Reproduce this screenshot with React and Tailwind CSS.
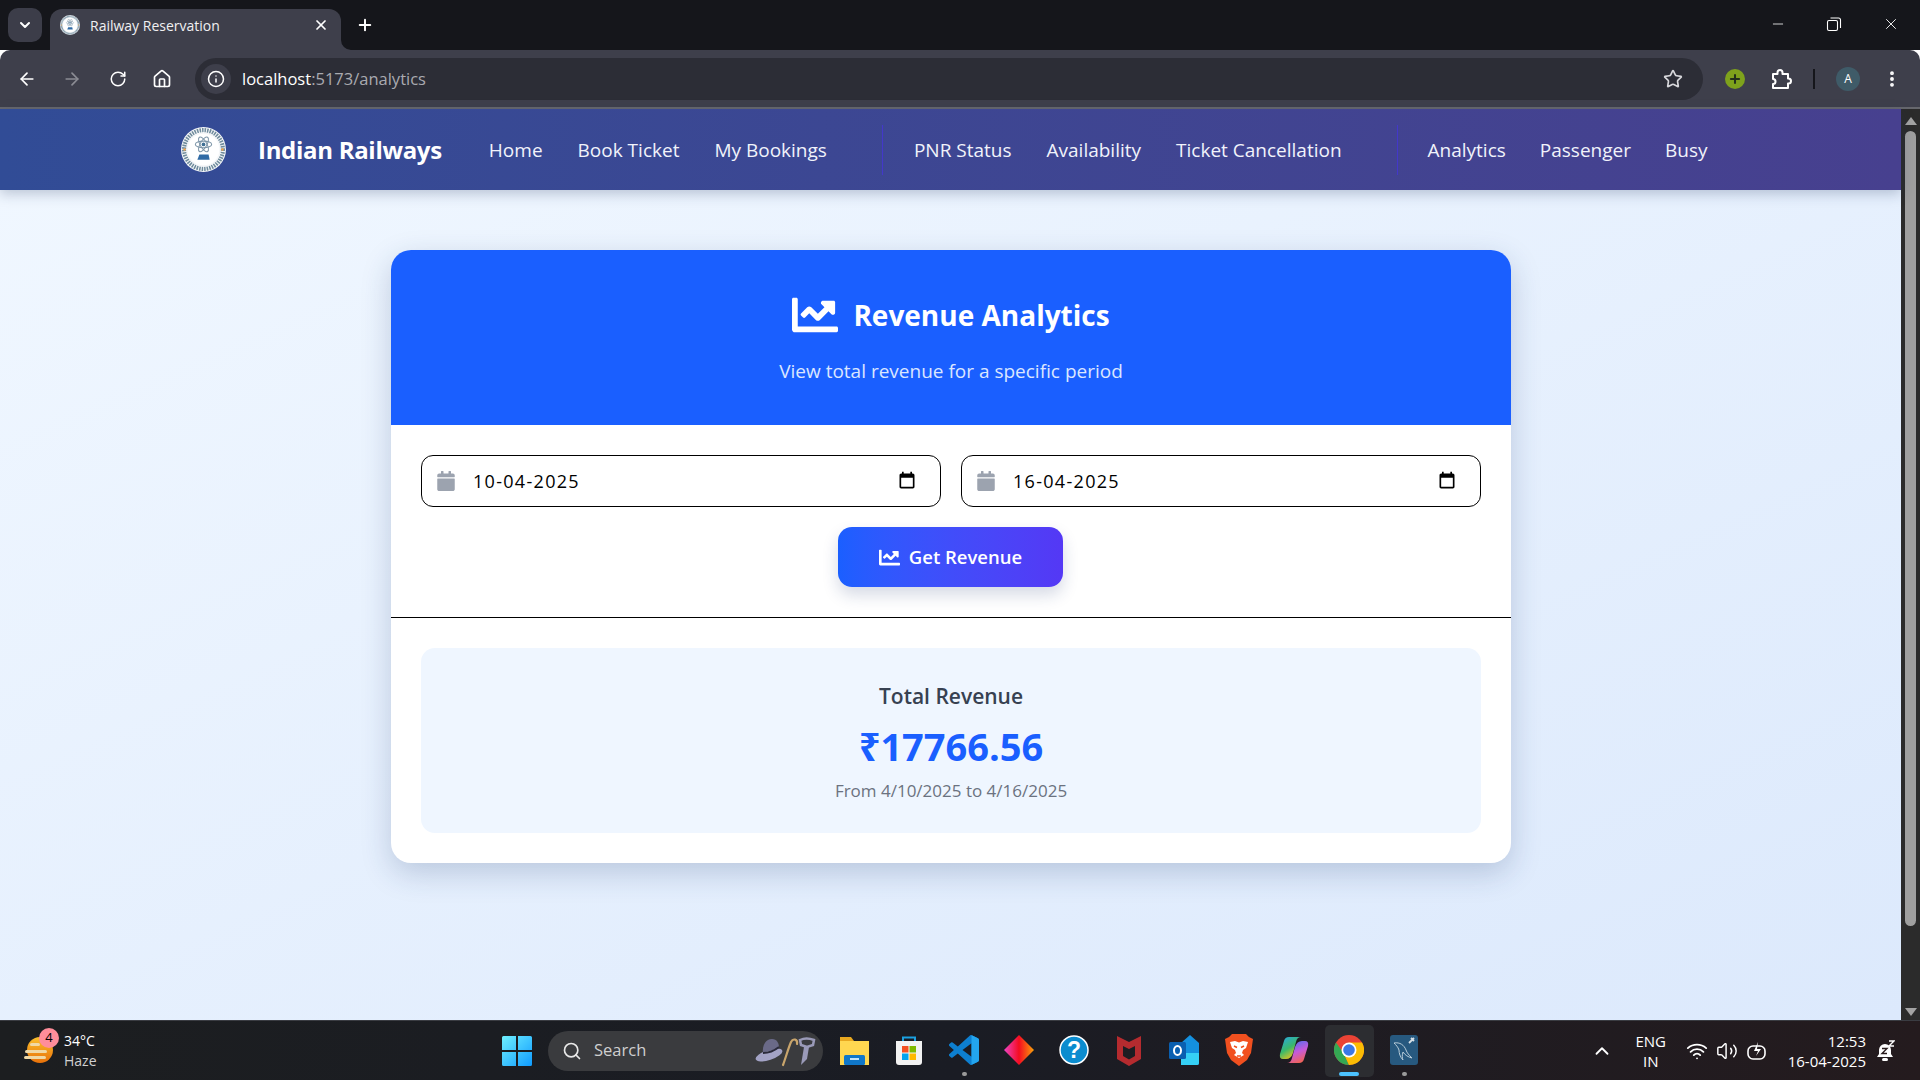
import { ArrowLeft, ArrowRight, RotateCw, Home, Info, Star, MoreVertical, ChevronDown, ChevronUp, X, Plus, Minus, Search, Wifi, Volume2 } from 'lucide-react';
import { FaChartLine, FaCalendar } from 'react-icons/fa';

// little round emblem used for favicon + navbar
function Emblem({ size }) {
  return (
    <svg width={size} height={size} viewBox="0 0 44 44" className="shrink-0">
      <circle cx="22" cy="22" r="22" fill="#f4f6f8" />
      <circle cx="22" cy="22" r="19" fill="none" stroke="#6f8b9c" strokeWidth="4" strokeDasharray="1.5 1" />
      <circle cx="22" cy="22" r="15.5" fill="#fff" />
      <ellipse cx="22" cy="17" rx="8" ry="3.2" fill="none" stroke="#7d95a8" strokeWidth="1" />
      <ellipse cx="22" cy="17" rx="8" ry="3.2" fill="none" stroke="#7d95a8" strokeWidth="1" transform="rotate(60 22 17)" />
      <ellipse cx="22" cy="17" rx="8" ry="3.2" fill="none" stroke="#7d95a8" strokeWidth="1" transform="rotate(120 22 17)" />
      <circle cx="22" cy="17" r="1.8" fill="#3f6f94" />
      <path d="M16 32l2-5h9l1 5z" fill="#2f6aa5" />
      <circle cx="3.5" cy="22" r="1.2" fill="#f0a24a" />
      <circle cx="40.5" cy="22" r="1.2" fill="#f0a24a" />
    </svg>
  );
}

function NavLink({ children }) {
  return <a className="text-[19px] leading-[28px] text-[#f1f3fb] whitespace-nowrap">{children}</a>;
}

function NativeCalendar() {
  return (
    <svg width="20" height="20" viewBox="0 0 24 24" fill="#000">
      <path d="M19 3h-1V1h-2v2H8V1H6v2H5c-1.1 0-2 .9-2 2v14c0 1.1.9 2 2 2h14c1.1 0 2-.9 2-2V5c0-1.1-.9-2-2-2zm0 16H5V8h14v11z" />
    </svg>
  );
}

function DateField({ value }) {
  return (
    <div className="flex-1 h-[52px] flex items-center rounded-[12px] border border-black bg-white pl-[15px] pr-[23px]">
      <FaCalendar className="text-[#9ca3af] w-[18px] h-[20px]" />
      <span className="ml-[18px] flex-1 text-[18px] text-black tracking-[1.3px]">{value}</span>
      <NativeCalendar />
    </div>
  );
}

function TitleBar() {
  return (
    <div className="h-[50px] bg-[#15161b] flex items-end relative shrink-0">
      <div className="absolute left-[8px] top-[8px] w-[34px] h-[34px] rounded-[10px] bg-[#3c3d49] flex items-center justify-center">
        <ChevronDown size={16} strokeWidth={3} className="text-white" />
      </div>
      <div className="relative ml-[50px] w-[291px] h-[41px] bg-[#3e3f4b] rounded-t-[12px] flex items-center pl-[10px] pr-[12px] pb-[9px]">
        <Emblem size={20} />
        <span className="ml-[10px] text-[14px] text-[#f0f0f2] flex-1">Railway Reservation</span>
        <X size={16} strokeWidth={2.6} className="text-white" />
        <svg width="10" height="10" viewBox="0 0 10 10" className="absolute -right-[10px] bottom-0">
          <path d="M0 0a10 10 0 0 0 10 10H0z" fill="#3e3f4b" />
        </svg>
      </div>
      <Plus size={18} strokeWidth={2.6} className="text-white absolute left-[356px] top-[16px]" />
      <div className="ml-auto flex h-full items-center pr-[20px] gap-[40px] text-white pb-[2px]">
        <Minus size={16} strokeWidth={1.2} />
        <svg width="16" height="16" viewBox="0 0 16 16" fill="none" stroke="#fff" strokeWidth="1.1">
          <rect x="1.5" y="4.5" width="10" height="10" rx="1.5" />
          <path d="M4.5 2h8a2 2 0 0 1 2 2v8" />
        </svg>
        <X size={18} strokeWidth={1.2} />
      </div>
    </div>
  );
}

function ToolBar() {
  return (
    <div className="h-[59px] bg-[#3e3f4b] border-b-2 border-[#66676d] rounded-t-[10px] flex items-center shrink-0">
      <ArrowLeft size={20} strokeWidth={2} className="ml-[17px] text-white" />
      <ArrowRight size={20} strokeWidth={2} className="ml-[25px] text-[#8b8c94]" />
      <RotateCw size={18} strokeWidth={2} className="ml-[27px] text-white" />
      <Home size={20} strokeWidth={2} className="ml-[25px] text-white" />
      <div className="ml-[23px] w-[1508px] h-[42px] rounded-full bg-[#2c2d36] flex items-center pl-[6px] pr-[20px]">
        <div className="w-[30px] h-[30px] rounded-full bg-[#3e3f4b] flex items-center justify-center">
          <Info size={18} className="text-white" />
        </div>
        <span className="ml-[11px] pt-[2px] text-[16.5px] text-white">localhost<span className="text-[#a9aab0]">:5173/analytics</span></span>
        <Star size={20} className="ml-auto text-[#d8d8dc]" />
      </div>
      <div className="ml-[22px] w-[20px] h-[20px] rounded-full bg-[#7ea21c] flex items-center justify-center">
        <Plus size={14} strokeWidth={3.5} className="text-[#23301c]" />
      </div>
      <svg width="24" height="24" viewBox="0 0 24 24" fill="none" stroke="#fff" strokeWidth="2" strokeLinejoin="round" className="ml-[24px]">
        <path d="M4 7h4.500V5.500a2.500 2.500 0 0 1 5 0V7H19v4.500h.5a2.500 2.500 0 0 1 0 5H19V21H4v-4a2.500 2.500 0 0 0 0-5z" />
      </svg>
      <div className="ml-[20px] w-[2px] h-[20px] bg-[#15161b]" />
      <div className="ml-[21px] w-[24px] h-[24px] rounded-full bg-[#3f5b68] flex items-center justify-center text-[12px] text-white">A</div>
      <MoreVertical size={20} strokeWidth={2.6} className="ml-[22px] text-white" />
    </div>
  );
}

function Navbar() {
  return (
    <nav className="h-[81px] shrink-0 bg-gradient-to-r from-[#314c96] to-[#47408f] flex items-center pl-[181px] shadow-[0_4px_12px_rgba(30,50,90,0.25)] relative z-10">
      <Emblem size={45} />
      <span className="ml-[32px] text-[24px] font-bold text-white whitespace-nowrap tracking-[-0.3px]">Indian Railways</span>
      <div className="ml-[47px] flex items-center gap-[35px]">
        <NavLink>Home</NavLink>
        <NavLink>Book Ticket</NavLink>
        <NavLink>My Bookings</NavLink>
      </div>
      <div className="ml-[55px] w-px h-[50px] bg-[#4338ca]" />
      <div className="ml-[31px] flex items-center gap-[35px]">
        <NavLink>PNR Status</NavLink>
        <NavLink>Availability</NavLink>
        <NavLink>Ticket Cancellation</NavLink>
      </div>
      <div className="ml-[55px] w-px h-[50px] bg-[#4338ca]" />
      <div className="ml-[30px] flex items-center gap-[34px]">
        <NavLink>Analytics</NavLink>
        <NavLink>Passenger</NavLink>
        <NavLink>Busy</NavLink>
      </div>
    </nav>
  );
}

function RevenueCard() {
  return (
    <div className="w-[1120px] ml-[1px] rounded-[20px] bg-white overflow-hidden shadow-[0_10px_30px_rgba(30,60,110,0.22)]">
      <div className="h-[175px] bg-[#1a5fff] flex flex-col items-center pt-[42px]">
        <div className="flex items-center gap-[15px]">
          <FaChartLine className="text-white w-[46px] h-[46px]" />
          <h1 className="text-[28px] font-bold leading-[36px] text-white">Revenue Analytics</h1>
        </div>
        <p className="mt-[19px] text-[19px] leading-[28px] text-[#dbe6ff]">View total revenue for a specific period</p>
      </div>
      <div className="px-[30px] pt-[30px] pb-[30px] border-b border-black">
        <div className="flex gap-[20px]">
          <DateField value="10-04-2025" />
          <DateField value="16-04-2025" />
        </div>
        <div className="mt-[20px] flex justify-center pr-[1px]">
          <button className="w-[225px] h-[60px] rounded-[14px] bg-gradient-to-r from-[#1a5fff] to-[#5438f5] flex items-center justify-center gap-[9px] text-white text-[18.5px] font-semibold shadow-[0_8px_16px_rgba(30,50,110,0.18)]">
            <FaChartLine className="w-[21px] h-[21px]" />
            Get Revenue
          </button>
        </div>
      </div>
      <div className="p-[30px]">
        <div className="h-[185px] rounded-[14px] bg-[#eff6ff] flex flex-col items-center pt-[33px]">
          <p className="text-[21px] leading-[30px] font-semibold text-[#374151]">Total Revenue</p>
          <p className="mt-[13px] text-[38px] leading-[44px] font-bold text-[#1a5fff]">₹17766.56</p>
          <p className="mt-[10px] text-[17px] leading-[26px] text-[#6b7280]">From 4/10/2025 to 4/16/2025</p>
        </div>
      </div>
    </div>
  );
}

function Scrollbar() {
  return (
    <div className="w-[19px] shrink-0 bg-[#2b2b2b] flex flex-col items-center pt-[8px] pb-[4px]">
      <div className="w-0 h-0 border-x-[6px] border-x-transparent border-b-[8px] border-b-[#a3a3a3]" />
      <div className="mt-[6px] w-[11px] h-[795px] rounded-full bg-[#9f9f9f]" />
      <div className="mt-auto w-0 h-0 border-x-[6px] border-x-transparent border-t-[8px] border-t-[#a3a3a3]" />
    </div>
  );
}

function TaskIcon({ children, dot, active }) {
  return (
    <div className={`relative h-[52px] flex items-center justify-center rounded-[5px] pb-[2px] ${active ? 'w-[49px] -mx-[4.5px] bg-[#2c2d31]' : 'w-[40px]'}`}>
      {children}
      {dot && <div className="absolute bottom-[1px] w-[5px] h-[4px] rounded-full bg-[#9a9a9a]" />}
      {active && <div className="absolute bottom-[1px] w-[20px] h-[4px] rounded-full bg-[#4cc2ff]" />}
    </div>
  );
}

function Taskbar() {
  return (
    <footer className="h-[60px] shrink-0 border-t border-[#3a3c42] bg-gradient-to-r from-[#1c1e20] via-[#1a1c24] to-[#241b1e] flex items-center relative">
      <div className="absolute left-[24px] top-[12px] w-[32px] h-[34px]">
        <svg width="32" height="34" viewBox="0 0 32 34">
          <defs>
            <linearGradient id="sun" x1="0" y1="0" x2="0" y2="1">
              <stop offset="0" stopColor="#fbc02d" />
              <stop offset="1" stopColor="#e8710a" />
            </linearGradient>
          </defs>
          <circle cx="16" cy="17" r="13" fill="url(#sun)" />
          <rect x="6" y="10" width="10" height="3" rx="1.5" fill="#f0d9a6" />
          <rect x="1" y="17" width="22" height="3" rx="1.5" fill="#f0d9a6" />
          <rect x="0" y="23" width="22" height="3" rx="1.5" fill="#f0d9a6" />
        </svg>
      </div>
      <div className="absolute left-[39px] top-[7px] w-[20px] h-[20px] rounded-full bg-[#ff8d9a] flex items-center justify-center text-[13px] text-black">4</div>
      <div className="absolute left-[64px] top-[10px] text-[14px] leading-[20px] text-white">34°C<div className="text-[#d0d0d0]">Haze</div></div>

      <div className="ml-[502px] flex items-center">
        <svg width="30" height="30" viewBox="0 0 30 30" className="shrink-0">
          <defs>
            <linearGradient id="win" x1="0" y1="0" x2="1" y2="1">
              <stop offset="0" stopColor="#6ff0ff" />
              <stop offset="1" stopColor="#0f9bff" />
            </linearGradient>
          </defs>
          <path d="M0 1.5A1.5 1.5 0 0 1 1.5 0H14v14H0zM16 0h12.5A1.5 1.5 0 0 1 30 1.5V14H16zM0 16h14v14H1.5A1.5 1.5 0 0 1 0 28.5zM16 16h14v12.5a1.5 1.5 0 0 1-1.5 1.5H16z" fill="url(#win)" />
        </svg>
        <div className="ml-[16px] w-[275px] h-[40px] rounded-full bg-[#3a3b3e] flex items-center pl-[14px] pr-[6px]">
          <Search size={20} strokeWidth={2} className="text-[#e8e8e8]" />
          <span className="ml-[12px] text-[16.5px] text-[#cfcfcf]">Search</span>
          <svg width="62" height="32" viewBox="0 0 62 32" className="ml-auto">
            <ellipse cx="14" cy="20" rx="14" ry="5" fill="#a3a3c6" transform="rotate(-18 14 20)" />
            <path d="M8 18c-1-8 3-14 9-14 5 0 7 4 7 9z" fill="#6a6a88" />
            <path d="M8 18c5 0 11-2 16-6" fill="none" stroke="#2b2b3c" strokeWidth="2" />
            <path d="M28 30c3-8 5-16 8-23 2-4 7-3 6 2" fill="none" stroke="#c9a56c" strokeWidth="2.200" strokeLinecap="round" />
            <path d="M45 5c4-2 9-2 14 0l-1 5-6 2-6-2z" fill="none" stroke="#9a9ab8" strokeWidth="2.500" />
            <path d="M49 12l5 0-2 12-6 6z" fill="#9a9ab8" />
          </svg>
        </div>
        <div className="ml-[11px] flex items-center gap-[15px]">
          <TaskIcon>
            <svg width="30" height="30" viewBox="0 0 30 30">
              <path d="M1 2h11l3 4h14v24H1z" fill="#e8a820" />
              <rect x="1" y="6" width="29" height="24" fill="#ffd750" />
              <rect x="5" y="20" width="21" height="10" rx="1.5" fill="#1077c9" />
              <rect x="11" y="23" width="9" height="2" fill="#bfe4ff" />
            </svg>
          </TaskIcon>
          <TaskIcon>
            <svg width="30" height="30" viewBox="0 0 30 30">
              <path d="M9 6V2.500h12V6" fill="none" stroke="#1ba0e0" strokeWidth="2" />
              <path d="M2 6h26v21a3 3 0 0 1-3 3H5a3 3 0 0 1-3-3z" fill="#f2f2f2" />
              <rect x="8" y="11" width="6.5" height="6.5" fill="#f25022" />
              <rect x="15.5" y="11" width="6.5" height="6.5" fill="#7fba00" />
              <rect x="8" y="18.5" width="6.5" height="6.5" fill="#00a4ef" />
              <rect x="15.5" y="18.5" width="6.5" height="6.5" fill="#ffb900" />
            </svg>
          </TaskIcon>
          <TaskIcon dot>
            <svg width="30" height="30" viewBox="0 0 24 24">
              <path d="M23.15 2.587L18.21.21a1.494 1.494 0 0 0-1.705.29l-9.46 8.63-4.12-3.128a.999.999 0 0 0-1.276.057L.327 7.261A1 1 0 0 0 .326 8.74L3.899 12 .326 15.26a1 1 0 0 0 .001 1.479L1.65 17.94a.999.999 0 0 0 1.276.057l4.12-3.128 9.46 8.63a1.492 1.492 0 0 0 1.704.29l4.942-2.377A1.5 1.5 0 0 0 24 20.06V3.939a1.5 1.5 0 0 0-.85-1.352zm-5.146 14.861L10.826 12l7.178-5.448v10.896z" fill="#0d7fd0" />
              <path d="M18.004 0.100a1.500 1.500 0 0 1 .206.110l4.940 2.377A1.500 1.500 0 0 1 24 3.939v16.120a1.500 1.500 0 0 1-.850 1.354l-4.940 2.377a1.500 1.500 0 0 1-.206.090z" fill="#23a5ee" />
            </svg>
          </TaskIcon>
          <TaskIcon>
            <svg width="30" height="30" viewBox="0 0 30 30">
              <defs>
                <linearGradient id="gem" x1="0" y1="0" x2="1" y2="0">
                  <stop offset="0" stopColor="#ee44c6" />
                  <stop offset="0.5" stopColor="#f50c20" />
                  <stop offset="1" stopColor="#f9a10a" />
                </linearGradient>
              </defs>
              <path d="M15 0 30 15 15 30 0 15z" fill="url(#gem)" />
            </svg>
          </TaskIcon>
          <TaskIcon>
            <svg width="30" height="30" viewBox="0 0 30 30">
              <circle cx="15" cy="15" r="14" fill="#0b8ccf" stroke="#fff" strokeWidth="1.500" />
              <text x="15" y="23" textAnchor="middle" fontSize="23" fontWeight="700" fontFamily="Liberation Sans" fill="#fff">?</text>
            </svg>
          </TaskIcon>
          <TaskIcon>
            <svg width="30" height="32" viewBox="0 0 30 32">
              <path d="M3 2l12 6 12-6v23l-12 7-12-7z" fill="#b52b2f" />
              <path d="M9 12l6 3 6-3v10l-6 3.500L9 22z" fill="#1c1d22" />
            </svg>
          </TaskIcon>
          <TaskIcon>
            <svg width="30" height="30" viewBox="0 0 30 30">
              <path d="M12 8 21 0l9 8v20a2 2 0 0 1-2 2H12z" fill="#1490df" />
              <path d="M12 18h18v10a2 2 0 0 1-2 2H12z" fill="#35d0f5" />
              <rect x="0" y="7" width="17" height="17" rx="1.500" fill="#0a5fb0" />
              <ellipse cx="8.500" cy="15.500" rx="3.500" ry="4.500" fill="none" stroke="#fff" strokeWidth="2" />
            </svg>
          </TaskIcon>
          <TaskIcon>
            <svg width="28" height="32" viewBox="0 0 28 32">
              <path d="M7 0h14l3 3 4 2-2 14-4 7-8 6-8-6-4-7L0 5l4-2z" fill="#f1501f" />
              <path d="M5 8l5-1 4 1.500L18 7l5 1-2 6-3 2-1 3 2 2-5 3-5-3 2-2-1-3-3-2z" fill="#fff" />
              <path d="M9 12l3 1.500M19 12l-3 1.500M12 22h4" stroke="#f1501f" strokeWidth="1.500" fill="none" />
            </svg>
          </TaskIcon>
          <TaskIcon>
            <svg width="30" height="30" viewBox="0 0 30 30">
              <defs>
                <linearGradient id="cop1" x1="0" y1="0" x2="0.6" y2="1">
                  <stop offset="0" stopColor="#28a8ea" />
                  <stop offset="0.55" stopColor="#3ab86b" />
                  <stop offset="1" stopColor="#f5c518" />
                </linearGradient>
                <linearGradient id="cop2" x1="0.3" y1="0" x2="0.7" y2="1">
                  <stop offset="0" stopColor="#4f6ff0" />
                  <stop offset="0.5" stopColor="#c65ad8" />
                  <stop offset="1" stopColor="#f5634a" />
                </linearGradient>
              </defs>
              <path d="M10 2h12q-4 0-5 5l-3 11q-2 6-7 6H4q-4 0-3-5L5 6q1-4 5-4z" fill="url(#cop1)" />
              <path d="M20 28H8q4 0 5-5l3-11q2-6 7-6h3q4 0 3 5l-4 13q-1 4-5 4z" fill="url(#cop2)" />
            </svg>
          </TaskIcon>
          <TaskIcon active>
            <svg width="30" height="30" viewBox="0 0 30 30">
              <circle cx="15" cy="15" r="15" fill="#ea4335" />
              <path d="M15 30A15 15 0 0 1 2 7.500L9.500 18 15 30z" fill="#34a853" />
              <path d="M15 30l-5.500-12L15 7.500h13A15 15 0 0 1 15 30z" fill="#fbbc04" />
              <circle cx="15" cy="15" r="7.500" fill="#fff" />
              <circle cx="15" cy="15" r="5.800" fill="#3b78e7" />
            </svg>
          </TaskIcon>
          <TaskIcon dot>
            <svg width="28" height="30" viewBox="0 0 28 30">
              <rect width="28" height="30" rx="3" fill="#27597f" />
              <path d="M4 8c6-1 10 2 12 7 1 3 3 5 6 8-4-1-7-3-9-6-1 3-1 6 0 8-3-3-4-7-4-10C8 12 6 10 4 8z" fill="none" stroke="#b7ccd9" strokeWidth="1" />
              <path d="M19 8l5-5M21 3l3 3" stroke="#d5dfe6" strokeWidth="1.800" />
            </svg>
          </TaskIcon>
        </div>
      </div>

      <div className="absolute right-0 top-0 h-full flex items-center text-white">
        <ChevronUp size={22} strokeWidth={2} className="mr-[21px]" />
        <div className="text-[15px] leading-[20px] text-center w-[34px] mr-[18px]">ENG<div>IN</div></div>
        <Wifi size={22} strokeWidth={2} className="mr-[8px]" />
        <Volume2 size={22} strokeWidth={1.6} className="mr-[9px]" />
        <svg width="20" height="20" viewBox="0 0 20 20" fill="none" stroke="#fff" strokeWidth="1.600" className="mr-[21px]">
          <rect x="1" y="5" width="17" height="13" rx="5" />
          <path d="M11 1 7 10h4l-2 5 5-7h-4z" fill="#fff" stroke="none" />
        </svg>
        <div className="text-[15px] leading-[20px] text-right mr-[11px]">12:53<div>16-04-2025</div></div>
        <svg width="18" height="22" viewBox="0 0 18 22" className="mr-[25px]">
          <path d="M8 4a6 6 0 0 1 6 6v4l2 3H0l2-3v-4a6 6 0 0 1 6-6z" fill="#fff" />
          <rect x="5" y="18" width="6" height="3" rx="1.500" fill="#fff" />
          <path d="M5 8.500h5l-5 5h5" fill="none" stroke="#2a1c1e" strokeWidth="1.400" />
          <path d="M12 1h5l-5 5h5" fill="none" stroke="#fff" strokeWidth="1.400" />
        </svg>
      </div>
    </footer>
  );
}

export default function App() {
  return (
    <div className="w-[1920px] h-[1080px] flex flex-col overflow-hidden font-['Open_Sans','Noto_Sans',sans-serif]">
      <TitleBar />
      <ToolBar />
      <div className="flex-1 flex min-h-0">
        <div className="flex-1 flex flex-col min-w-0">
          <Navbar />
          <main className="flex-1 bg-gradient-to-br from-[#f0f7ff] to-[#dce9fc] flex justify-center items-start pt-[60px]">
            <RevenueCard />
          </main>
        </div>
        <Scrollbar />
      </div>
      <Taskbar />
    </div>
  );
}
